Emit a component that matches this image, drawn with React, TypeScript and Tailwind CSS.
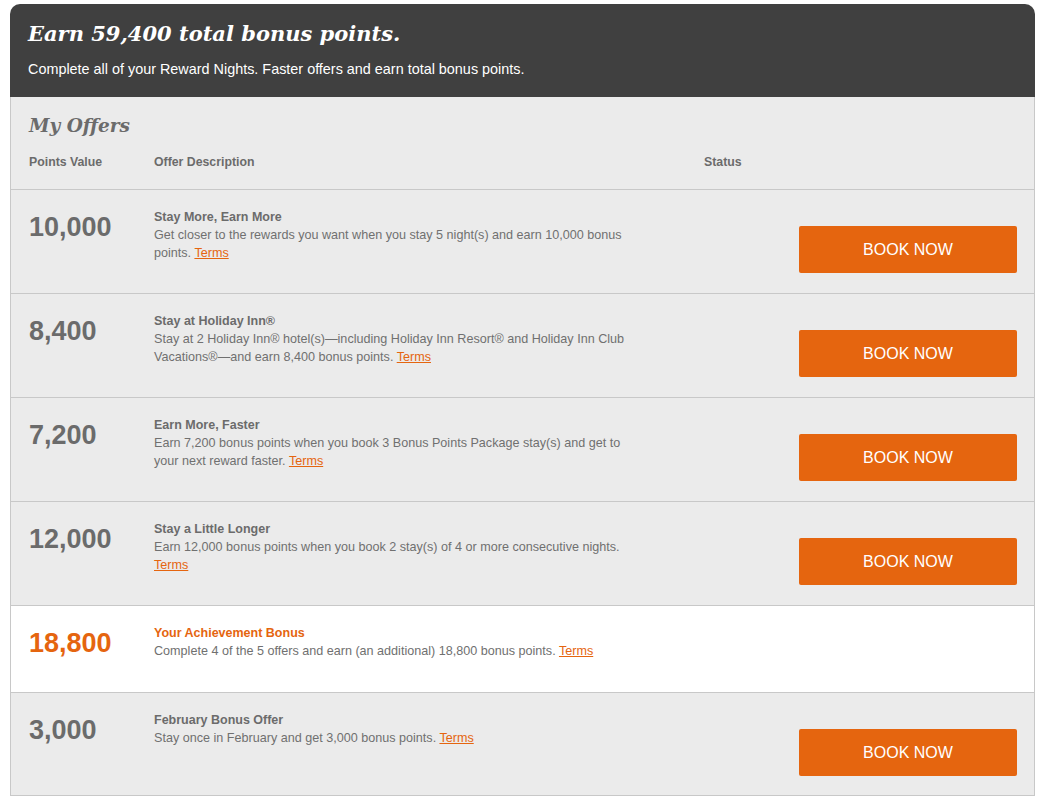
import React from 'react';

interface Offer {
    points: string;
    title: string;
    text: string;
    highlight?: boolean;
    book?: boolean;
}

const offers: Offer[] = [
    { points: '10,000', title: 'Stay More, Earn More', text: 'Get closer to the rewards you want when you stay 5 night(s) and earn 10,000 bonus points.', book: true },
    { points: '8,400', title: 'Stay at Holiday Inn®', text: 'Stay at 2 Holiday Inn® hotel(s)—including Holiday Inn Resort® and Holiday Inn Club Vacations®—and earn 8,400 bonus points.', book: true },
    { points: '7,200', title: 'Earn More, Faster', text: 'Earn 7,200 bonus points when you book 3 Bonus Points Package stay(s) and get to your next reward faster.', book: true },
    { points: '12,000', title: 'Stay a Little Longer', text: 'Earn 12,000 bonus points when you book 2 stay(s) of 4 or more consecutive nights.', book: true },
    { points: '18,800', title: 'Your Achievement Bonus', text: 'Complete 4 of the 5 offers and earn (an additional) 18,800 bonus points.', highlight: true },
    { points: '3,000', title: 'February Bonus Offer', text: 'Stay once in February and get 3,000 bonus points.', book: true },
];

const OfferRow = ({ offer, last }: { offer: Offer; last: boolean }) => {
    const bg = offer.highlight ? 'bg-white' : 'bg-[#ebebeb]';
    const accent = offer.highlight ? 'text-[#e5650f]' : 'text-[#6b6b6b]';
    const pb = !offer.book ? 'pb-[32px]' : last ? 'pb-[19px]' : 'pb-[20px]';
    return (
        <div className={`flex border-t border-[#c8c8c8] pl-[18px] pr-[17px] pt-[20px] ${pb} ${bg}`}>
            <div className={`w-[125px] shrink-0 mt-[2px] text-[27px] leading-[30px] font-bold ${accent}`}>{offer.points}</div>
            <div className="w-[488px] shrink-0">
                <div className={`text-[12.5px] leading-[14px] font-bold ${accent}`}>{offer.title}</div>
                <div className="mt-[2px] text-[12.6px] leading-[18px] text-[#707070]">
                    {offer.text} <a href="#" className="text-[#e5650f] underline">Terms</a>
                </div>
            </div>
            <div className="flex-1" />
            {offer.book && (
                <button className="mt-[16px] w-[218px] h-[47px] shrink-0 rounded-[2px] bg-[#e5650f] text-white text-[16px]">BOOK NOW</button>
            )}
        </div>
    );
}

export default function App() {
    return (
        <div className="min-h-screen bg-white pt-[4px] font-['Liberation_Sans',Arial,sans-serif]">
            <div className="ml-[10px] w-[1025px]">
                <div className="rounded-t-[10px] bg-[#404040] pl-[18px] pt-[16px] pb-[19px] text-white">
                    <h1 className="font-['DejaVu_Serif',Georgia,serif] italic font-bold text-[21px] leading-[28px]">Earn 59,400 total bonus points.</h1>
                    <p className="mt-[12px] text-[14.4px] leading-[18px]">Complete all of your Reward Nights. Faster offers and earn total bonus points.</p>
                </div>
                <div className="border-l border-r border-b border-[#c8c8c8] bg-[#ebebeb]">
                    <div className="pl-[18px] pt-[16px] pb-[20px]">
                        <h2 className="font-['DejaVu_Serif',Georgia,serif] italic font-bold text-[18.5px] leading-[26px] text-[#6b6b6b]">My Offers</h2>
                        <div className="mt-[16px] flex text-[12.3px] leading-[14px] font-bold text-[#6b6b6b]">
                            <div className="w-[125px]">Points Value</div>
                            <div className="w-[550px]">Offer Description</div>
                            <div>Status</div>
                        </div>
                    </div>
                    {offers.map((o, i) => <OfferRow key={i} offer={o} last={i === offers.length - 1} />)}
                </div>
            </div>
        </div>
    );
}
